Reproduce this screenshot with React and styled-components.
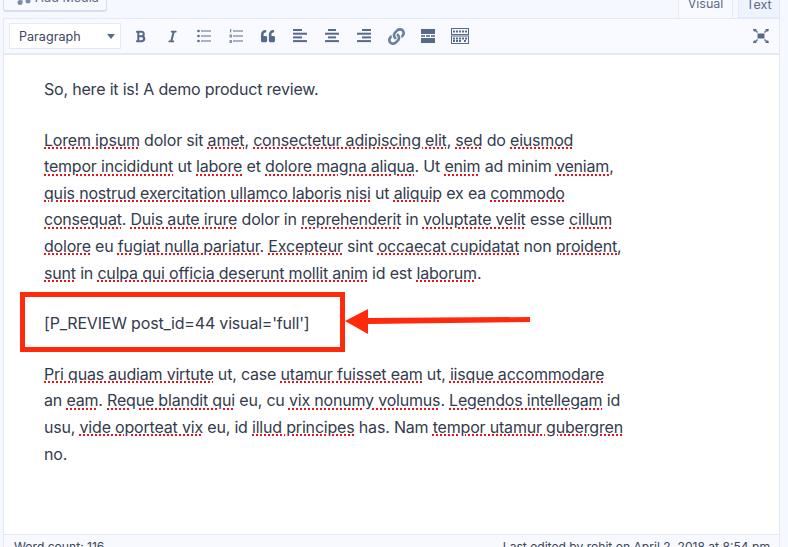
import React from 'react';
import styled, { createGlobalStyle } from 'styled-components';
import { FaBold, FaItalic, FaLink, FaQuoteLeft } from 'react-icons/fa';

const GlobalStyle = createGlobalStyle`
    html, body {
        margin: 0;
        padding: 0;
        background: #f5f8ff;
    }
    body {
        font-family: Inter, "Noto Sans", sans-serif;
        color: #333b4d;
    }
`

const Page = styled.div`
    width: 788px;
    height: 547px;
    position: relative;
    overflow: hidden;
    background: #f5f8ff;
`

const TopBar = styled.div`
    height: 18px;
    margin: 0 8px 0 3px;
    display: flex;
    align-items: flex-end;
    justify-content: space-between;
    overflow: hidden;
`

const MediaButton = styled.button`
    flex: none;
    width: 104px;
    height: 28px;
    margin: 0 0 6px;
    display: flex;
    align-items: center;
    gap: 4px;
    padding: 0 0 0 13px;
    font: 12.5px Inter, sans-serif;
    color: #5b6b85;
    background: #f7f9ff;
    border: 1px solid #d5deee;
    border-bottom-width: 2px;
    border-radius: 3px;
`

const Tabs = styled.div`
    display: flex;
    gap: 5px;
    align-items: flex-end;
`

const Tab = styled.div`
    width: ${p => p.$width}px;
    height: ${p => p.$active ? 29 : 28}px;
    box-sizing: border-box;
    padding-top: 4px;
    text-align: center;
    font-size: 12.5px;
    line-height: 20px;
    color: #5b6b85;
    background: ${p => p.$active ? '#f9faff' : '#eff3fd'};
    border: 1px solid #e3e9f6;
    border-bottom: ${p => p.$active ? 'none' : '1px solid #e3e9f6'};
`

const Editor = styled.div`
    margin: 0 8px 0 3px;
    border: 1px solid #e3e9f6;
    border-bottom: none;
    background: #fff;
`

const Toolbar = styled.div`
    height: 36px;
    box-sizing: border-box;
    padding: 0 2px 0 5px;
    display: flex;
    align-items: center;
    background: #f9faff;
    border-bottom: 2px solid #e3e9f6;
`

const FormatSelect = styled.div`
    width: 112px;
    height: 26px;
    box-sizing: border-box;
    margin-right: 3px;
    padding: 0 5px 0 9px;
    display: flex;
    align-items: center;
    justify-content: space-between;
    font-size: 12.6px;
    color: #3c4659;
    background: #fff;
    border: 1px solid #e3e9f6;
`

const Caret = styled.span`
    width: 0;
    height: 0;
    border-left: 4px solid transparent;
    border-right: 4px solid transparent;
    border-top: 5px solid #566a8a;
`

const ToolButton = styled.span`
    flex: none;
    width: 32px;
    height: 26px;
    display: flex;
    align-items: center;
    justify-content: center;
    color: ${p => p.$soft ? '#6b7f9f' : '#566a8a'};
`

const ToolSpacer = styled.div`
    flex: 1;
`

const Content = styled.div`
    height: 479px;
    box-sizing: border-box;
    padding: 21px 0 0 40px;
    font-size: 16px;
    line-height: 26.6px;
    letter-spacing: -0.19px;
`

const Paragraph = styled.p`
    margin: 0 0 24px;
    width: 590px;
    white-space: nowrap;
`

const Typo = styled.span`
    text-decoration: underline dotted #f01018 2px;
    text-underline-offset: 2px;
`

const Footer = styled.div`
    padding: 5px 9px 0 10px;
    display: flex;
    justify-content: space-between;
    font-size: 12.1px;
    line-height: 14px;
    color: #3c4659;
    border-top: 1px solid #e3e9f6;
    background: #f7f9ff;
`

const RedBox = styled.div`
    position: absolute;
    left: 20px;
    top: 292px;
    width: 325px;
    height: 60px;
    box-sizing: border-box;
    border: 5px solid #ff2a0c;
`

const ArrowSvg = styled.svg`
    position: absolute;
    left: 344px;
    top: 306px;
`

const Icon = ({ w = 16, h = 16, children }) => (
    <svg width={w} height={h} viewBox={`0 0 ${w} ${h}`} fill="currentColor">{children}</svg>
)

const MusicIcon = () => <svg width="14" height="14" viewBox="0 0 14 14" fill="#7d8ca6">
    <circle cx="3" cy="11.500" r="2.500" /><circle cx="11" cy="10" r="2.500" />
    <path d="M4.500 11V2L13 0v9h-1V3L5.500 5v6z" />
</svg>

const BulletIcon = () => <Icon w={14} h={14}>
    <circle cx="1.500" cy="2" r="1.300" /><circle cx="1.500" cy="7" r="1.300" /><circle cx="1.500" cy="12" r="1.300" />
    <rect x="4" y="1.500" width="10" height="1" /><rect x="4" y="6.500" width="10" height="1" /><rect x="4" y="11.500" width="10" height="1" />
</Icon>

const NumberIcon = () => <Icon w={14} h={14}>
    <rect x="1.200" y="0" width="1" height="3.500" /><rect x="0.500" y="5.500" width="2.500" height="3" opacity="0.7" /><rect x="0.500" y="11" width="2.500" height="3" opacity="0.7" />
    <rect x="4" y="1.500" width="10" height="1" /><rect x="4" y="6.500" width="10" height="1" /><rect x="4" y="11.500" width="10" height="1" />
</Icon>

const AlignIcon = ({ bars }) => <Icon w={14} h={14}>
    {bars.map(([x, width], i) => <rect key={i} x={x} y={i * 3.700} width={width} height="2" />)}
</Icon>

const MoreIcon = () => <Icon w={14} h={14}>
    <rect x="0" y="0" width="14" height="5" />
    <rect x="0" y="6.200" width="4" height="1.600" /><rect x="5" y="6.200" width="4" height="1.600" /><rect x="10" y="6.200" width="4" height="1.600" />
    <rect x="0" y="9" width="14" height="5" />
</Icon>

const KitchenIcon = () => <svg width="18" height="16" viewBox="0 0 18 16" fill="none" stroke="currentColor">
    <rect x="0.500" y="0.500" width="17" height="6" />
    <rect x="0.500" y="8" width="17" height="7.500" />
    <path d="M2 3.500h14M2 10.500h14M2 13h9M13 13h3" strokeWidth="2" strokeDasharray="2 1" />
</svg>

const FullscreenIcon = () => <Icon w={16} h={14}>
    <rect x="4.500" y="4.500" width="7" height="5" />
    <path d="M0 0h4L3 1l2 2-1 1L2 2 1 3zM16 0h-4l1 1-2 2 1 1 2-2 1 1zM0 14h4l-1-1 2-2-1-1-2 2-1-1zM16 14h-4l1-1-2-2 1-1 2 2 1-1z" />
</Icon>

const App = () => {
    return <Page>
        <GlobalStyle />
        <TopBar>
            <MediaButton><MusicIcon />Add Media</MediaButton>
            <Tabs>
                <Tab $active $width={55}>Visual</Tab>
                <Tab $width={42}>Text</Tab>
            </Tabs>
        </TopBar>
        <Editor>
            <Toolbar>
                <FormatSelect>Paragraph<Caret /></FormatSelect>
                <ToolButton><FaBold size={13} /></ToolButton>
                <ToolButton><FaItalic size={13} /></ToolButton>
                <ToolButton><BulletIcon /></ToolButton>
                <ToolButton><NumberIcon /></ToolButton>
                <ToolButton><FaQuoteLeft size={14} /></ToolButton>
                <ToolButton><AlignIcon bars={[[0, 9], [0, 14], [0, 9], [0, 14]]} /></ToolButton>
                <ToolButton><AlignIcon bars={[[3, 8], [0, 14], [3, 8], [0, 14]]} /></ToolButton>
                <ToolButton><AlignIcon bars={[[5, 9], [0, 14], [5, 9], [0, 14]]} /></ToolButton>
                <ToolButton $soft><FaLink size={17} /></ToolButton>
                <ToolButton><MoreIcon /></ToolButton>
                <ToolButton><KitchenIcon /></ToolButton>
                <ToolSpacer />
                <ToolButton><FullscreenIcon /></ToolButton>
            </Toolbar>
            <Content>
                <Paragraph>So, here it is! A demo product review.</Paragraph>
                <Paragraph>
                    <Typo>Lorem ipsum</Typo> dolor sit <Typo>amet</Typo>, <Typo>consectetur adipiscing elit</Typo>, <Typo>sed</Typo> do <Typo>eiusmod</Typo><br />
                    <Typo>tempor incididunt</Typo> ut <Typo>labore</Typo> et <Typo>dolore magna aliqua</Typo>. Ut <Typo>enim</Typo> ad minim <Typo>veniam</Typo>,<br />
                    <Typo>quis nostrud exercitation ullamco laboris nisi</Typo> ut <Typo>aliquip</Typo> ex ea <Typo>commodo</Typo><br />
                    <Typo>consequat</Typo>. <Typo>Duis aute irure</Typo> dolor in <Typo>reprehenderit</Typo> in <Typo>voluptate velit</Typo> esse <Typo>cillum</Typo><br />
                    <Typo>dolore</Typo> eu <Typo>fugiat nulla pariatur</Typo>. <Typo>Excepteur</Typo> sint <Typo>occaecat cupidatat</Typo> non <Typo>proident</Typo>,<br />
                    <Typo>sunt</Typo> in <Typo>culpa qui officia deserunt mollit anim</Typo> id est <Typo>laborum</Typo>.
                </Paragraph>
                <Paragraph>[P_REVIEW post_id=44 visual='full']</Paragraph>
                <Paragraph>
                    <Typo>Pri quas audiam virtute</Typo> ut, case <Typo>utamur fuisset eam</Typo> ut, <Typo>iisque accommodare</Typo><br />
                    an <Typo>eam</Typo>. <Typo>Reque blandit qui</Typo> eu, cu <Typo>vix nonumy volumus</Typo>. <Typo>Legendos intellegam</Typo> id<br />
                    usu, <Typo>vide oporteat vix</Typo> eu, id <Typo>illud principes</Typo> has. Nam <Typo>tempor utamur gubergren</Typo><br />
                    no.
                </Paragraph>
            </Content>
            <Footer>
                <span>Word count: 116</span>
                <span>Last edited by rohit on April 2, 2018 at 8:54 pm</span>
            </Footer>
        </Editor>
        <RedBox />
        <ArrowSvg width="188" height="32" viewBox="0 0 188 32">
            <path d="M1 15L24 3V12L186 11V16L24 18V28Z" fill="#ff2a0c" />
        </ArrowSvg>
    </Page>
}

export default App;
